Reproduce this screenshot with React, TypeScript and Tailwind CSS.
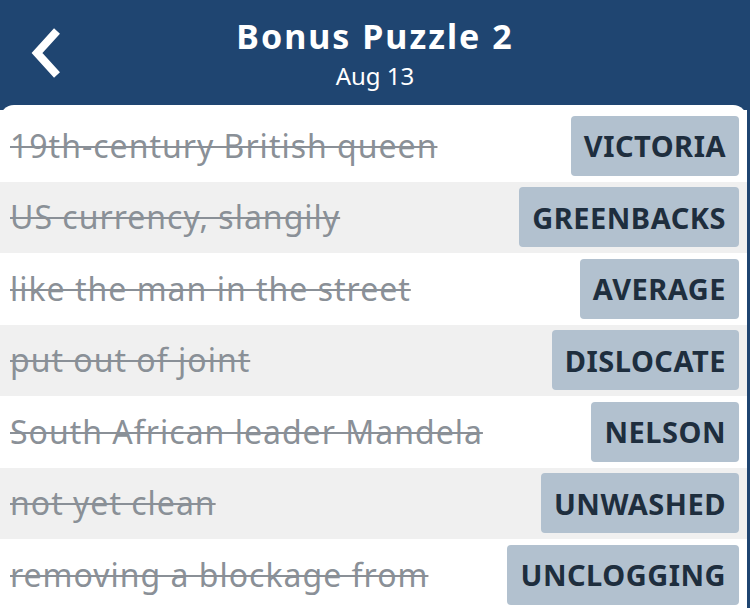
import React from "react";

const rows = [
  { clue: "19th-century British queen", answer: "VICTORIA" },
  { clue: "US currency, slangily", answer: "GREENBACKS" },
  { clue: "like the man in the street", answer: "AVERAGE" },
  { clue: "put out of joint", answer: "DISLOCATE" },
  { clue: "South African leader Mandela", answer: "NELSON" },
  { clue: "not yet clean", answer: "UNWASHED" },
  { clue: "removing a blockage from", answer: "UNCLOGGING" },
];

function BackIcon() {
  return (
    <svg width="40" height="56" viewBox="0 0 40 56" className="block">
      <polyline points="30,6 10,28 30,50" fill="none" stroke="white" strokeWidth="8" strokeLinecap="butt" strokeLinejoin="miter" />
    </svg>
  );
}

export default function App() {
  return (
    <div className="w-[750px] h-[608px] overflow-hidden bg-[#1f4571] font-['Noto_Sans',sans-serif]">
      <header className="relative h-[105px] flex flex-col items-center text-white">
        <div className="absolute left-[27px] top-[25px]"><BackIcon /></div>
        <h1 className="mt-[14px] text-[34px] font-bold leading-[44px] tracking-[2px]">Bonus Puzzle 2</h1>
        <div className="mt-[4px] text-[24px] leading-[28px]">Aug 13</div>
      </header>
      <div className="bg-white rounded-t-[14px] pt-[5px] mr-[3px] h-full">
        {rows.map((r, i) => (
          <div key={i} className={`h-[71.5px] flex items-center justify-between pl-[10px] pr-[8px] ${i % 2 === 1 ? "bg-[#f0f0f0]" : "bg-white"}`}>
            <span className="text-[32px] tracking-[1px] text-[#8a9097] line-through decoration-[2px]">{r.clue}</span>
            <span className="h-[60px] flex items-center pl-[13px] pr-[13px] rounded-[4px] bg-[#b2c1cf] text-[#1e2e3e] text-[29px] font-bold tracking-[0.5px]">{r.answer}</span>
          </div>
        ))}
      </div>
    </div>
  );
}
